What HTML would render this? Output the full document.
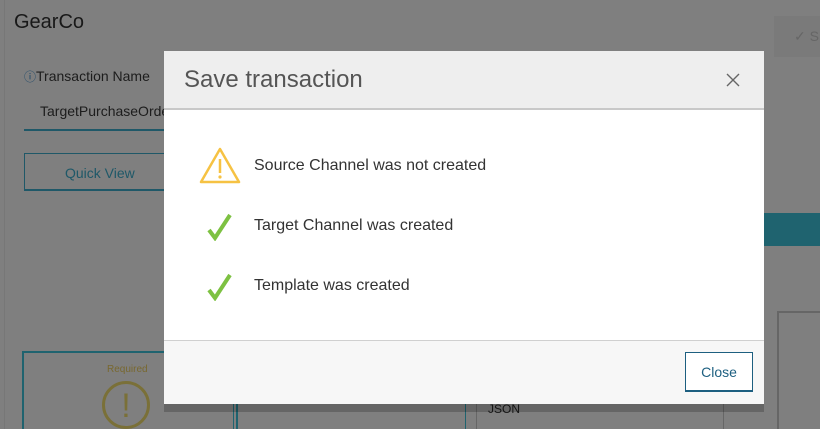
<!DOCTYPE html>
<html><head><style>
html,body{margin:0;width:820px;height:429px;overflow:hidden;background:#fff}
body{font-family:"Liberation Sans",sans-serif}
#w{position:relative;width:820px;height:429px;overflow:hidden;background:#fff}
.a{position:absolute}
</style></head><body><div id="w">
<div class="a" style="left:4px;top:0;width:1px;height:429px;background:#eee"></div>
<div class="a" style="left:14px;top:11px;font-size:20px;color:#333">GearCo</div>
<div class="a" style="left:774px;top:16px;width:46px;height:41px;background:#f4f4f4;color:#ccc;font-size:14px;line-height:41px;padding-left:20px">✓ S</div>
<div class="a" style="left:24px;top:68px;font-size:14px;color:#3a3a3a"><span style="color:#3a8fd0;font-size:12px">ⓘ</span>Transaction Name</div>
<div class="a" style="left:40px;top:103px;font-size:14px;color:#3a3a3a">TargetPurchaseOrder</div>
<div class="a" style="left:24px;top:129px;width:150px;height:2px;background:#3eb1d0"></div>
<div class="a" style="left:24px;top:153px;width:150px;height:38px;border:1px solid #3eb1d0;border-bottom-width:2px;color:#3eb1d0;font-size:14px;line-height:38px;box-sizing:border-box;padding-left:40px">Quick View</div>
<div class="a" style="left:700px;top:213px;width:120px;height:33px;background:#3ec6df"></div>
<div class="a" style="left:777px;top:311px;width:60px;height:130px;border:2px solid #ccc"></div>
<div class="a" style="left:22px;top:351px;width:212px;height:100px;border:2px solid #3ec6df"></div>
<div class="a" style="left:107px;top:364px;font-size:10px;color:#f0d060">Required</div>
<div class="a" style="left:102px;top:381px;width:48px;height:48px;border:3px solid #f4e070;border-radius:50%;box-sizing:border-box;color:#f4e070;font-size:34px;text-align:center;line-height:44px">!</div>
<div class="a" style="left:233px;top:400px;width:1px;height:29px;background:#3ec6df"></div>
<div class="a" style="left:465px;top:400px;width:1px;height:29px;background:#3ec6df"></div>
<div class="a" style="left:476px;top:400px;width:1px;height:29px;background:#ccc"></div>
<div class="a" style="left:723px;top:400px;width:1px;height:29px;background:#ccc"></div>
<div class="a" style="left:488px;top:402px;font-size:12px;color:#333">JSON</div>
<div class="a" style="left:0;top:0;width:820px;height:429px;background:rgba(0,0,0,0.5)"></div>
<div class="a" style="left:164px;top:58px;width:600px;height:354px;background:rgba(0,0,0,0.2)"></div>
<div class="a" style="left:164px;top:51px;width:600px;height:352px;background:#fff">
 <div style="height:57px;background:#eee;border-bottom:2px solid #c8c8c8;position:relative">
  <div class="a" style="left:20px;top:15px;font-size:24px;color:#555">Save transaction</div>
  <svg class="a" style="left:562px;top:22px" width="14" height="14"><path d="M1 1L13 13M13 1L1 13" stroke="#666" stroke-width="1.4"/></svg>
 </div>
 <svg class="a" style="left:34px;top:95px" width="44" height="40"><path d="M22 3L41 36H3Z" fill="none" stroke="#f6c243" stroke-width="2.5" stroke-linejoin="round"/><path d="M22 13V27" stroke="#f6c243" stroke-width="2.5"/><circle cx="22" cy="31" r="1.6" fill="#f6c243"/></svg>
 <div class="a" style="left:90px;top:106px;font-size:16px;color:#333">Source Channel was not created</div>
 <svg class="a" style="left:42px;top:162px" width="28" height="28"><path d="M3 17L9 25L24 2" fill="none" stroke="#7dc142" stroke-width="4"/></svg>
 <div class="a" style="left:90px;top:166px;font-size:16px;color:#333">Target Channel was created</div>
 <svg class="a" style="left:42px;top:222px" width="28" height="28"><path d="M3 17L9 25L24 2" fill="none" stroke="#7dc142" stroke-width="4"/></svg>
 <div class="a" style="left:90px;top:226px;font-size:16px;color:#333">Template was created</div>
 <div class="a" style="left:0;top:289px;width:600px;height:63px;background:#f7f7f7;border-top:1px solid #d0d0d0">
  <div class="a" style="left:521px;top:11px;width:68px;height:40px;border:1px solid #1d5f80;border-bottom-width:2px;box-sizing:border-box;color:#1d5f80;font-size:14px;text-align:center;line-height:38px;background:#fff">Close</div>
 </div>
</div>
</div></body></html>
